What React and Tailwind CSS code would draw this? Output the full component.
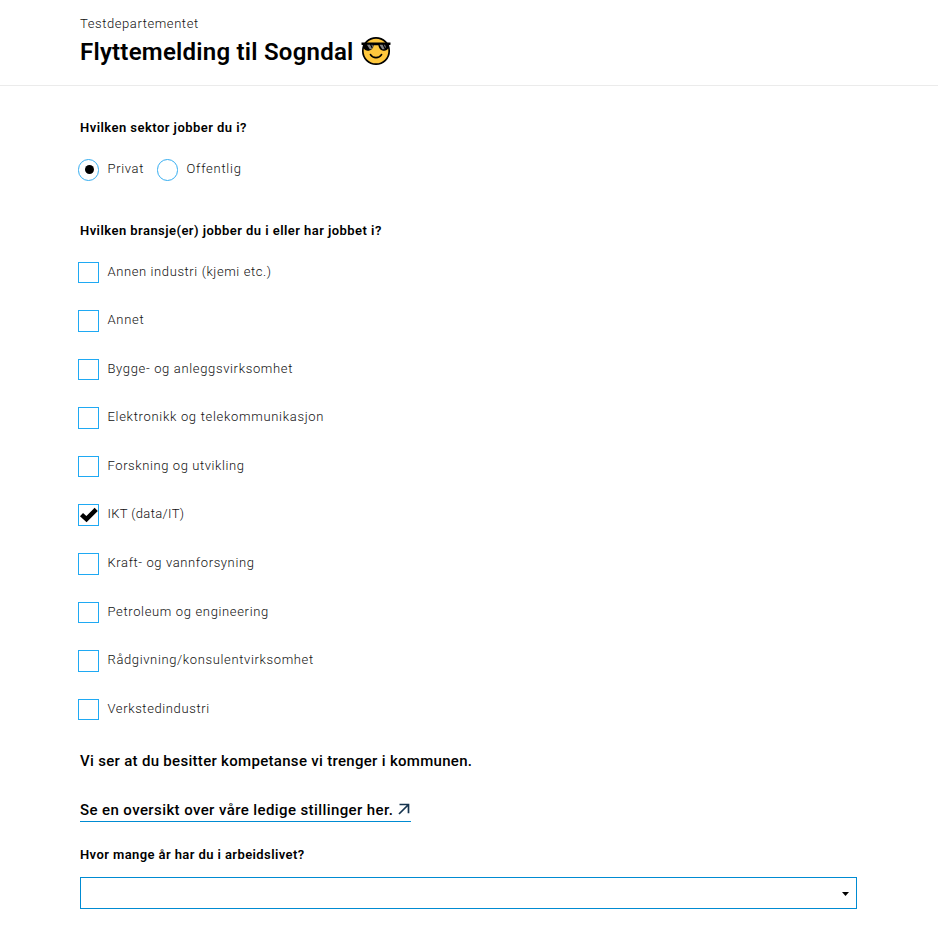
const industries = [
  { label: "Annen industri (kjemi etc.)", tracking: "tracking-[0.6px]" },
  { label: "Annet", tracking: "tracking-[0.7px]" },
  { label: "Bygge- og anleggsvirksomhet", tracking: "tracking-[0.65px]" },
  { label: "Elektronikk og telekommunikasjon", tracking: "tracking-[0.69px]" },
  { label: "Forskning og utvikling", tracking: "tracking-[0.59px]" },
  { label: "IKT (data/IT)", tracking: "tracking-[0.35px]", checked: true },
  { label: "Kraft- og vannforsyning", tracking: "tracking-[0.61px]" },
  { label: "Petroleum og engineering", tracking: "tracking-[0.65px]" },
  { label: "Rådgivning/konsulentvirksomhet", tracking: "tracking-[0.63px]" },
  { label: "Verkstedindustri", tracking: "tracking-[0.61px]" },
];

function CoolFace() {
  return (
    <svg className="ml-[7.5px] h-[30px] w-[30px]" viewBox="0 0 30 30">
      <circle cx="15" cy="15" r="13.2" fill="#ffc83d" stroke="#000" strokeWidth="1.7" />
      <path
        d="M0.500 6.500h29v2.200l-1.500.6c-.3 3.400-1.700 5.500-4.700 5.500-3.500 0-5.300-2.100-5.900-5.500h-4.800c-.6 3.400-2.400 5.500-5.900 5.500-3 0-4.400-2.100-4.700-5.500L.5 8.700z"
        fill="#000"
      />
      <path d="M6 8.800h3l2.200 4.400h-2.400zM18.500 8.800h3l2.200 4.400h-2.400z" fill="#858585" />
      <path d="M10.200 8.800h1.300l1 2.200-.7 1zM22.700 8.800H24l1 2.200-.7 1z" fill="#6a6a6a" />
      <path
        d="M9.500 18.600c2.400 4 8.600 4 11 0"
        fill="none"
        stroke="#000"
        strokeWidth="1.700"
        strokeLinecap="round"
      />
    </svg>
  );
}

function ArrowUpRight() {
  return (
    <svg className="mb-px ml-[4.5px] mr-px h-3 w-3" viewBox="0 0 12 12" fill="none" stroke="#16344f" strokeWidth="1.700">
      <path d="M1.500 1.500h9v8.700M10.500 1.500L1 11" />
    </svg>
  );
}

function Radio({ label, checked, tracking }) {
  return (
    <div className="flex">
      <span className="flex h-[22px] w-[21px] items-center justify-center rounded-full border border-[#35adf0]">
        {checked && <span className="mb-px ml-px h-[9px] w-[9px] rounded-full bg-black" />}
      </span>
      <span className={`ml-[8.5px] mt-0.5 text-[13px] font-light leading-4 text-[#111] ${tracking}`}>
        {label}
      </span>
    </div>
  );
}

export default function App() {
  return (
    <div className="h-[929px] overflow-hidden bg-white font-[Roboto,sans-serif] text-black">
      <header className="h-[86px] border-b border-[#ebebeb] pl-20 pt-4">
        <p className="text-[13px] font-light leading-4 tracking-[0.58px] text-[#111]">Testdepartementet</p>
        <div className="mt-1 flex h-[30px] items-center">
          <h1 className="mt-0.5 whitespace-nowrap text-[24px] font-semibold leading-[30px] tracking-[0.240px]">
            Flyttemelding til Sogndal
          </h1>
          <CoolFace />
        </div>
      </header>
      <main className="pl-20 pt-[34px]">
        <h2 className="text-[13px] font-semibold leading-4 tracking-[0.460px]">Hvilken sektor jobber du i?</h2>
        <div className="-ml-0.5 mt-[23px] flex gap-[13px]">
          <Radio label="Privat" checked tracking="tracking-[0.65px]" />
          <Radio label="Offentlig" tracking="tracking-[0.75px]" />
        </div>
        <h2 className="mt-[42px] text-[13px] font-semibold leading-4 tracking-[0.450px]">
          Hvilken bransje(er) jobber du i eller har jobbet i?
        </h2>
        <ul className="-ml-0.5 mt-[22.600px]">
          {industries.map((item) => (
            <li key={item.label} className="flex h-[48.580px]">
              <span className="flex h-[21.500px] w-[21px] items-center justify-center border border-[#1fa9f3]">
                {item.checked && (
                  <svg className="mb-px h-[18px] w-[19px]" viewBox="0 0 19 18">
                    <path d="M2.500 8.600l5 4.600 9.700-9.800" fill="none" stroke="#000" strokeWidth="4.500" />
                  </svg>
                )}
              </span>
              <span
                className={`ml-[8.5px] mt-0.5 text-[13px] font-light leading-4 text-[#111] ${item.tracking}`}
              >
                {item.label}
              </span>
            </li>
          ))}
        </ul>
        <p className="mt-[3.600px] text-[15px] font-medium leading-5 tracking-[0.305px]">
          Vi ser at du besitter kompetanse vi trenger i kommunen.
        </p>
        <div className="mt-[29px] flex">
          <a className="flex h-[22px] items-center whitespace-nowrap border-b border-[#008bd2] pb-px text-[15px] font-medium leading-5 tracking-[0.400px]">
            Se en oversikt over våre ledige stillinger her.
            <ArrowUpRight />
          </a>
        </div>
        <h2 className="mt-[25px] text-[13px] font-semibold leading-4 tracking-[0.410px]">
          Hvor mange år har du i arbeidslivet?
        </h2>
        <div className="mt-[14px] flex h-8 w-[777px] items-center justify-end border border-[#008bd2] pr-[7px]">
          <svg className="mt-0.5 h-1 w-[7px]" viewBox="0 0 7 4">
            <path d="M0 0h7L3.500 4z" fill="#000" />
          </svg>
        </div>
      </main>
    </div>
  );
}
